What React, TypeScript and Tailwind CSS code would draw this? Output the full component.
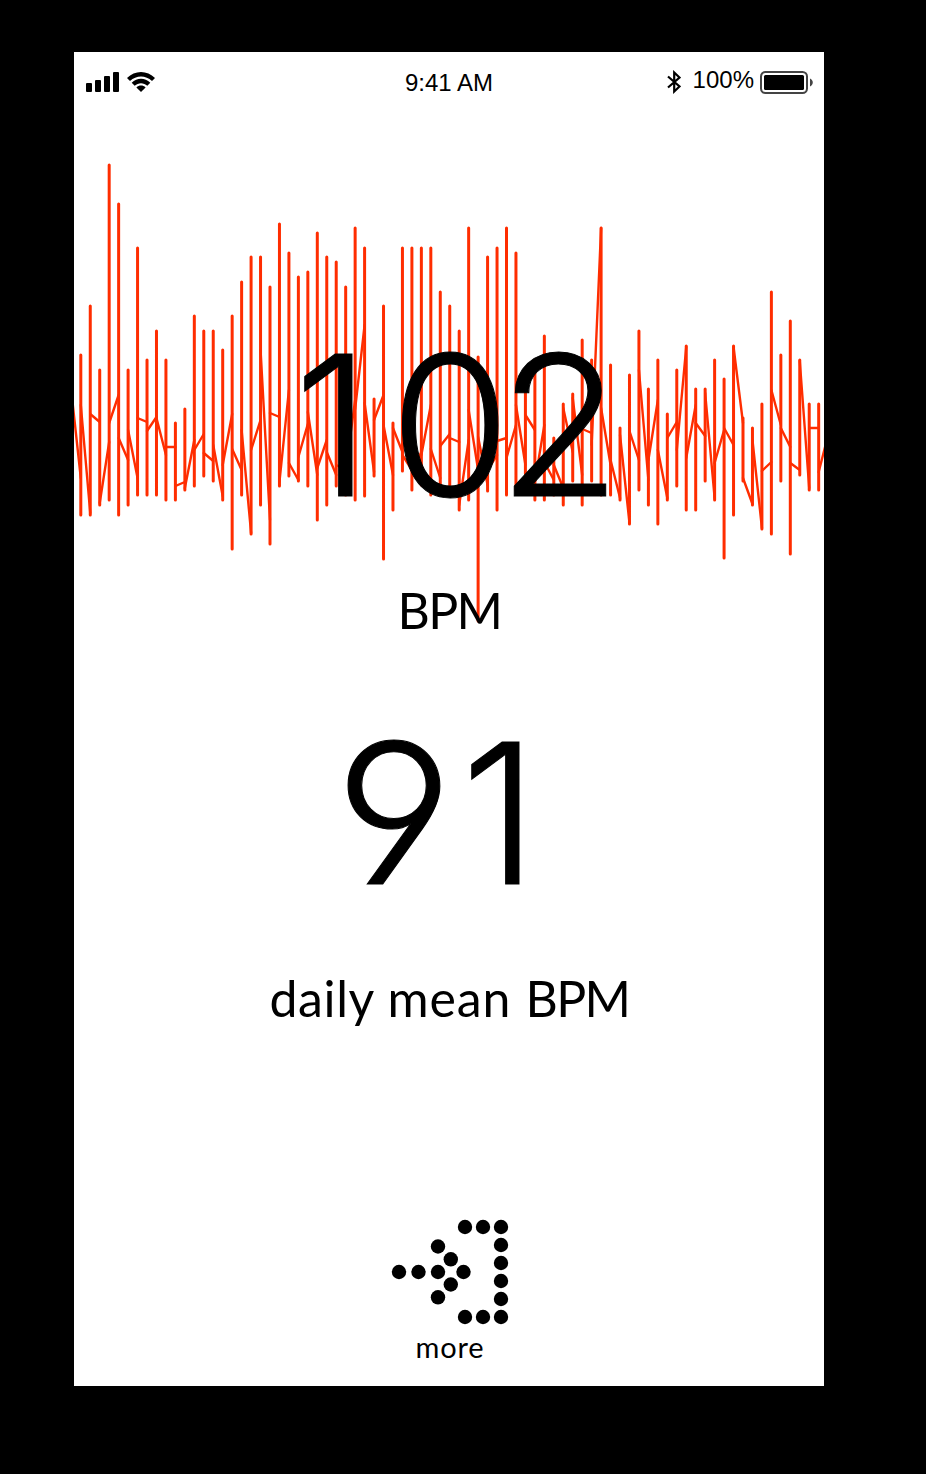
import React from "react";

// One entry per beat: [peak, trough, entry level, exit level]
const beats: [number, number, number, number][] = [
  [355, 515, 478, 405], [306, 515, 513, 414], [370, 505, 422, 503], [165, 500, 442, 423],
  [204, 515, 395, 438], [370, 505, 460, 430], [248, 495, 478, 418], [360, 495, 422, 431],
  [331, 495, 417, 418], [360, 500, 455, 447], [423, 500, 447, 486], [409, 490, 482, 488],
  [316, 486, 440, 450], [331, 476, 434, 453], [331, 481, 461, 445], [350, 500, 496, 465],
  [316, 549, 414, 449], [282, 495, 470, 430], [257, 534, 533, 450], [257, 505, 420, 350],
  [287, 544, 520, 413], [224, 486, 417, 482], [253, 476, 390, 463], [277, 481, 480, 457],
  [272, 486, 424, 412], [233, 520, 475, 468], [257, 505, 440, 452], [262, 486, 475, 465],
  [287, 495, 470, 470], [228, 500, 400, 409], [248, 496, 325, 403], [399, 476, 472, 420],
  [306, 559, 395, 425], [423, 510, 475, 428], [248, 471, 452, 455], [248, 490, 470, 470],
  [248, 485, 452, 455], [248, 495, 405, 449], [292, 490, 478, 446], [306, 490, 434, 438],
  [331, 510, 442, 505], [228, 500, 440, 410], [357, 621, 470, 437], [257, 491, 485, 470],
  [248, 510, 455, 441], [228, 495, 438, 458], [253, 490, 425, 405], [387, 474, 465, 415],
  [360, 500, 430, 482], [336, 500, 425, 462], [438, 495, 480, 465], [404, 505, 488, 408],
  [394, 481, 452, 398], [340, 505, 475, 429], [360, 481, 433, 445], [228, 495, 228, 408],
  [365, 495, 465, 460], [428, 500, 498, 435], [375, 524, 523, 431], [331, 490, 460, 370],
  [389, 505, 480, 460], [360, 524, 400, 450], [414, 500, 498, 438], [370, 486, 422, 450],
  [346, 510, 347, 458], [389, 510, 405, 423], [389, 481, 436, 393], [360, 500, 498, 463],
  [379, 558, 430, 428], [346, 515, 445, 347], [418, 481, 423, 478], [428, 505, 504, 440],
  [404, 529, 528, 471], [292, 534, 462, 390], [355, 481, 425, 428], [321, 554, 447, 463],
  [360, 475, 470, 361], [404, 490, 488, 428], [404, 490, 428, 472],
];

const beatX = (i: number) => 80.8 + i * 9.46;

const barPath = beats.map(([top, bottom], i) => `M${beatX(i)} ${top}V${bottom}`).join("");
const linkPath =
  `M71.3 391L${beatX(0)} ${beats[0][2]}` +
  beats
    .map(([, , , exit], i) => {
      const next = i + 1 < beats.length ? beats[i + 1][2] : 435;
      return `M${beatX(i)} ${exit}L${beatX(i + 1)} ${next}`;
    })
    .join("");

function HeartTrace() {
  return (
    <svg className="absolute top-0 left-0 h-[600px] w-[750px]" viewBox="74 52 750 600" fill="none" stroke="#ff2d00">
      <path d={linkPath} strokeWidth="2.4" strokeLinecap="round" />
      <path d={barPath} strokeWidth="3" strokeLinecap="round" />
    </svg>
  );
}

function StatusBar() {
  return (
    <header className="relative grid h-[60px] grid-cols-3 items-center text-[24px] leading-none">
      <div className="flex items-center gap-2 pl-3">
        <svg className="h-5 w-[33px]" viewBox="0 0 33 20">
          <rect x="0" y="11" width="6" height="9" rx="1" />
          <rect x="9" y="8" width="6" height="12" rx="1" />
          <rect x="18" y="4" width="6" height="16" rx="1" />
          <rect x="27" y="0" width="6" height="20" rx="1" />
        </svg>
        <svg className="h-5 w-7" viewBox="0 0 28 20">
          <path d="M0 6.1C7.8-2 20.2-2 28 6.1L25 9.1C18.8 2.9 9.2 2.9 3 9.1Z" />
          <path d="M4.7 10.7C10 5.5 18 5.5 23.3 10.7L20.3 13.8C16.7 10.3 11.3 10.3 7.7 13.8Z" />
          <path d="M9.4 15.4C12 12.9 16 12.9 18.6 15.4L14 20Z" />
        </svg>
      </div>
      <div className="pt-0.5 text-center">9:41 AM</div>
      <div className="flex items-center justify-end pr-[11px]">
        <svg className="h-6 w-[14px]" viewBox="0 0 14 24" fill="none" stroke="black" strokeWidth="2.2">
          <path d="M1 6.5L12.5 16.5L7.2 21.5V2.5L12.5 7.5L1 17.5" />
        </svg>
        <span className="mr-1.5 ml-3 pb-[5px]">100%</span>
        <svg className="h-6 w-[53px]" viewBox="0 0 53 24">
          <rect x="1" y="2" width="46" height="21" rx="4.5" fill="none" stroke="#444" strokeWidth="2" />
          <rect x="4" y="5" width="40" height="15" rx="1.5" />
          <path d="M50 8.5C53.7 10 53.7 15 50 16.5Z" fill="#444" />
        </svg>
      </div>
    </header>
  );
}

const dots: [number, number][] = [
  [399, 1272], [418.5, 1272], [438, 1272], [463.5, 1272],
  [438, 1246.5], [450.8, 1259.3], [450.8, 1284.5], [438, 1297.3],
  [465, 1227], [483, 1227], [501, 1227], [501, 1245], [501, 1263],
  [501, 1281], [501, 1299], [501, 1317], [483, 1317], [465, 1317],
];

export default function App() {
  return (
    <div className="h-[1474px] w-[926px] bg-black pt-[52px] pl-[74px] font-['Liberation_Sans',sans-serif] text-black">
      <main className="relative flex h-[1334px] w-[750px] flex-col overflow-hidden bg-white">
        <HeartTrace />
        <StatusBar />
        <section className="relative flex flex-col pt-[213px]">
          <div className="flex h-[200px] pl-[220px] font-['Inter',sans-serif] text-[195px] leading-[200px] font-light [-webkit-text-stroke:1px_black]">
            <span className="w-[96px]">1</span>
            <span className="w-[108px] tracking-[-17px]">0</span>
            <span className="w-[112px] origin-left scale-x-[1.03]">2</span>
          </div>
          <div className="mt-[50px] h-[70px] pl-[323.5px] font-['Lato',sans-serif] text-[50px] leading-[70px] tracking-[-1.7px]">BPM</div>
        </section>
        <section className="relative flex flex-col pt-[68px]">
          <div className="flex h-[200px] pl-[261px] font-['Inter',sans-serif] text-[195px] leading-[200px] font-light [-webkit-text-stroke:1px_black] [font-feature-settings:'cv04','ss01']">
            <span className="w-[126px] origin-left scale-x-[1.05]">9</span>
            <span className="w-[80px]">1</span>
          </div>
          <div className="mt-[50px] flex h-[70px] pl-[195.5px] font-['Lato',sans-serif] text-[50px] leading-[70px]">
            <span className="w-[118px] tracking-[0.6px]">daily</span>
            <span className="w-[138px] tracking-[0.9px]">mean</span>
            <span className="tracking-[-1.7px]">BPM</span>
          </div>
        </section>
        <footer className="mt-auto flex flex-col items-center pb-[19px]">
          <svg className="ml-0.5 h-[106px] w-[118px]" viewBox="391 1219 118 106">
            {dots.map(([x, y]) => (
              <circle key={`${x}-${y}`} cx={x} cy={y} r="7.2" />
            ))}
          </svg>
          <span className="mt-0.5 h-10 pl-0.5 font-['Lato',sans-serif] text-[29px] leading-10 tracking-[0.8px]">more</span>
        </footer>
      </main>
    </div>
  );
}
